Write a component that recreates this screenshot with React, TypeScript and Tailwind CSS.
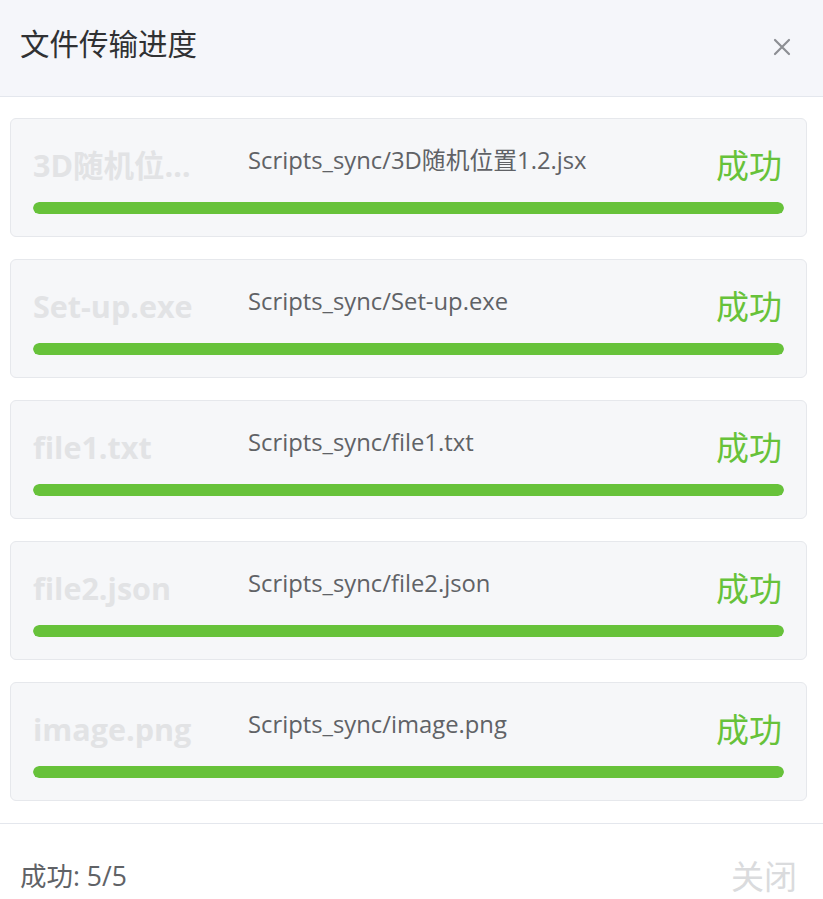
import React from "react";

type TransferItem = {
  name: string;
  path: string;
};

const items: TransferItem[] = [
  { name: "3D随机位置1.2.jsx", path: "Scripts_sync/3D随机位置1.2.jsx" },
  { name: "Set-up.exe", path: "Scripts_sync/Set-up.exe" },
  { name: "file1.txt", path: "Scripts_sync/file1.txt" },
  { name: "file2.json", path: "Scripts_sync/file2.json" },
  { name: "image.png", path: "Scripts_sync/image.png" },
];

const font = {
  fontFamily: '"Open Sans", "Noto Sans CJK SC", sans-serif',
};

const TransferCard: React.FC<{ item: TransferItem }> = ({ item }) => (
  <div className="bg-[#f6f7f9] border border-[#e6e8ec] rounded-[6px] px-[22px] pt-[18px] pb-[22px]">
    <div className="flex h-[56px] items-center">
      <div className="w-[180px] shrink-0 truncate text-[30.5px] font-bold text-[#e2e3e5] leading-[40px]">
        {item.name}
      </div>
      <div className="flex-1 self-start mt-[8px] ml-[35px] text-[23.8px] text-[#606266] leading-[30px]">
        {item.path}
      </div>
      <div className="text-[33px] text-[#67c23a] leading-[56px] pr-[2px] pt-[2px]">成功</div>
    </div>
    <div className="mt-[9px] h-[12px] rounded-full bg-[#ebeef5] overflow-hidden">
      <div className="h-full w-full rounded-full bg-[#67c23a]" />
    </div>
  </div>
);

export default function App() {
  return (
    <div className="w-full h-[899px] bg-white flex flex-col" style={font}>
      {/* Header */}
      <div className="h-[97px] shrink-0 bg-[#f5f6fa] border-b border-[#e4e7ed] pl-5 pr-[32px] pb-[8px] flex items-center justify-between">
        <h1 className="text-[29.5px] text-[#303133]">文件传输进度</h1>
        <svg width="18" height="18" viewBox="0 0 18 18" className="mt-[6px]">
          <path d="M2 2 L16 16 M16 2 L2 16" stroke="#8d8f94" strokeWidth="2.2" strokeLinecap="round" />
        </svg>
      </div>

      {/* List */}
      <div className="pl-[10px] pr-[16px] pt-[21px] pb-[22px] flex flex-col gap-[22px]">
        {items.map((item, i) => (
          <TransferCard key={i} item={item} />
        ))}
      </div>

      {/* Footer */}
      <div className="border-t border-[#e4e7ed] px-5 pr-[26px] pt-[28px] flex items-center justify-between">
        <span className="text-[26.5px] text-[#606266]">成功: 5/5</span>
        <span className="text-[33px] text-[#dadbdd]">关闭</span>
      </div>
    </div>
  );
}
